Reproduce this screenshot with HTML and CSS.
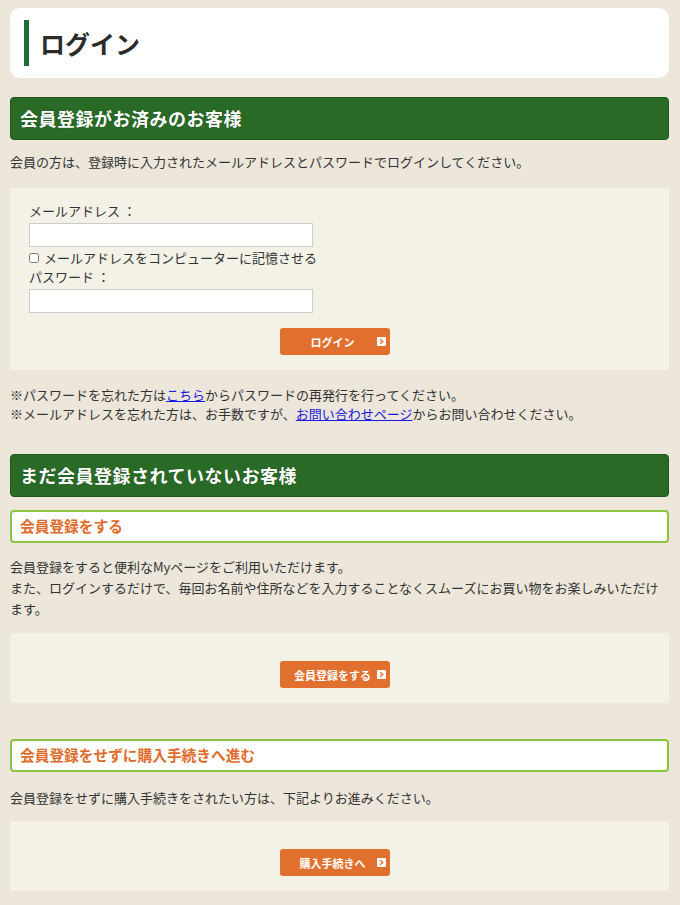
FILE: index.html
```html
<!DOCTYPE html>
<html lang="ja">
  <head>
    <meta charset="UTF-8" />
    <meta name="viewport" content="width=device-width, initial-scale=1.0" />
    <title>ログイン</title>
    <link rel="stylesheet" href="styles.css">
  </head>
  <body>
    <div class="page">
      <div class="page-title">
        <h1>ログイン</h1>
      </div>

      <h2 class="section-head">会員登録がお済みのお客様</h2>
      <p class="lead">会員の方は、登録時に入力されたメールアドレスとパスワードでログインしてください。</p>
      <div class="box login-box">
        <label class="field-label">メールアドレス ：</label>
        <input class="text-input" type="text" />
        <label class="remember"><input type="checkbox" /> メールアドレスをコンピューターに記憶させる</label>
        <label class="field-label">パスワード ：</label>
        <input class="text-input" type="password" />
        <div class="btn-row">
          <a class="btn" href="#">ログイン
            <svg class="btn-arrow" width="9" height="9" viewBox="0 0 9 9"><rect width="9" height="9" rx="1" fill="#fff"/><path d="M3.2 2.2 L5.8 4.5 L3.2 6.8" fill="none" stroke="#e1702e" stroke-width="1.4"/></svg>
          </a>
        </div>
      </div>
      <div class="notes">
        <p>※パスワードを忘れた方は<a href="#">こちら</a>からパスワードの再発行を行ってください。</p>
        <p>※メールアドレスを忘れた方は、お手数ですが、<a href="#">お問い合わせページ</a>からお問い合わせください。</p>
      </div>

      <h2 class="section-head second">まだ会員登録されていないお客様</h2>
      <h3 class="sub-head">会員登録をする</h3>
      <p class="lead-2">会員登録をすると便利なMyページをご利用いただけます。<br />また、ログインするだけで、毎回お名前や住所などを入力することなくスムーズにお買い物をお楽しみいただけます。</p>
      <div class="box action-box">
        <a class="btn" href="#">会員登録をする
          <svg class="btn-arrow" width="9" height="9" viewBox="0 0 9 9"><rect width="9" height="9" rx="1" fill="#fff"/><path d="M3.2 2.2 L5.8 4.5 L3.2 6.8" fill="none" stroke="#e1702e" stroke-width="1.4"/></svg>
        </a>
      </div>

      <h3 class="sub-head guest">会員登録をせずに購入手続きへ進む</h3>
      <p class="lead-3">会員登録をせずに購入手続きをされたい方は、下記よりお進みください。</p>
      <div class="box action-box last">
        <a class="btn" href="#">購入手続きへ
          <svg class="btn-arrow" width="9" height="9" viewBox="0 0 9 9"><rect width="9" height="9" rx="1" fill="#fff"/><path d="M3.2 2.2 L5.8 4.5 L3.2 6.8" fill="none" stroke="#e1702e" stroke-width="1.4"/></svg>
        </a>
      </div>
    </div>
  </body>
</html>
```

FILE: styles.css
```css
* {
  margin: 0;
  padding: 0;
  box-sizing: border-box;
}
body {
  background-color: #ede6da;
  color: #333;
  font-family: "Noto Sans CJK JP", "Noto Sans", sans-serif;
  font-size: 13px;
}
.page {
  width: 659px;
  margin-left: 10px;
  padding-top: 8px;
  padding-bottom: 14px;
}
.page-title {
  background: #fff;
  border-radius: 10px;
  height: 70px;
  padding: 12px 14px;
}
.page-title h1 {
  border-left: 5px solid #1a6e36;
  height: 46px;
  padding-left: 11px;
  font-size: 25px;
  font-weight: 700;
  line-height: 46px;
  color: #2b2b2b;
}
.section-head {
  margin-top: 19px;
  height: 43px;
  background: #286a26;
  border: 1px solid #1e571d;
  border-radius: 4px;
  color: #fff;
  font-size: 18px;
  font-weight: 700;
  letter-spacing: 0.5px;
  line-height: 41px;
  padding-left: 9px;
  text-shadow: 0 0 1px #173f16;
}
.section-head.second {
  margin-top: 31px;
}
.lead {
  margin-top: 11px;
  line-height: 21px;
}
.box {
  background: #f4f1e7;
}
.login-box {
  margin-top: 16px;
  padding: 13px 19px 15px;
  display: flex;
  flex-direction: column;
  align-items: flex-start;
}
.field-label {
  line-height: 20px;
  font-size: 13px;
}
.text-input {
  width: 284px;
  height: 24px;
  margin: 2px 0 1px;
  border: 1px solid #ccc;
  background: #fff;
  outline: 0;
}
.remember {
  display: flex;
  align-items: center;
  gap: 5px;
  line-height: 19px;
  font-size: 13px;
}
.remember input {
  width: 10px;
  height: 10px;
  margin: 0;
}
.btn-row {
  align-self: stretch;
  display: flex;
  justify-content: center;
  padding-right: 10px;
  margin-top: 14px;
}
.btn {
  position: relative;
  display: flex;
  align-items: center;
  justify-content: center;
  width: 110px;
  height: 27px;
  padding-right: 4px;
  background: #e1702e;
  border-radius: 3px;
  color: #fff;
  font-size: 11px;
  font-weight: 700;
  text-decoration: none;
}
.btn-arrow {
  position: absolute;
  right: 4px;
  top: 9px;
}
.notes {
  margin-top: 15px;
  line-height: 19px;
}
.notes a {
  color: #1a1adf;
}
.sub-head {
  margin-top: 13px;
  height: 33px;
  background: #fff;
  border: 2px solid #8cc43f;
  border-radius: 4px;
  color: #e06c2c;
  font-size: 14.7px;
  font-weight: 700;
  line-height: 28px;
  padding-left: 8px;
}
.sub-head.guest {
  margin-top: 36px;
}
.lead-2 {
  margin-top: 13px;
  line-height: 21px;
}
.lead-3 {
  margin-top: 15px;
  line-height: 21px;
}
.action-box {
  margin-top: 14px;
  height: 70px;
  padding: 28px 10px 15px 0;
  display: flex;
  justify-content: center;
}
.action-box.last {
  margin-top: 13px;
}
```
